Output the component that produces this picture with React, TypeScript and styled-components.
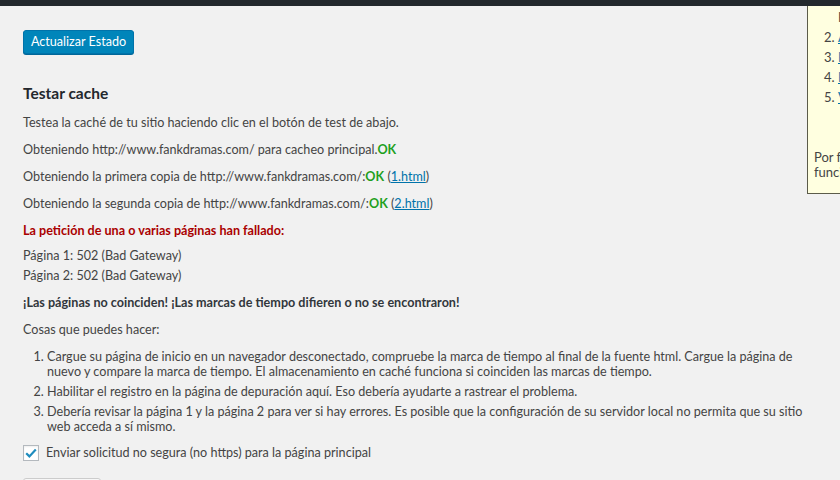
import React from "react";
import styled, { createGlobalStyle } from "styled-components";

const GlobalStyle = createGlobalStyle`
  html, body { margin: 0; padding: 0; }
  body {
    background: #f1f1f1;
    font-family: Lato, "Open Sans", sans-serif;
    font-size: 12.6px;
    color: #444;
    overflow: hidden;
    width: 840px;
    height: 480px;
  }
`;

const Page = styled.div`
  position: relative;
  width: 840px;
  height: 480px;
  overflow: hidden;
  display: flex;
  flex-direction: column;
`;

const AdminBar = styled.div`
  height: 6px;
  flex: none;
  background: #23282d;
`;

const Content = styled.main`
  display: flex;
  flex-direction: column;
  align-items: flex-start;
  padding: 0 33px 0 23px;
`;

const PrimaryButton = styled.button`
  margin-top: 24px;
  width: 111px;
  height: 24px;
  padding: 0;
  border: 1px solid #0073aa;
  border-radius: 3px;
  background: #0085ba;
  box-shadow: 0 1px 0 #006799;
  color: #fff;
  font-family: Lato, "Open Sans", sans-serif;
  font-size: 12.6px;
  line-height: 22px;
  text-align: center;
`;

const Heading = styled.h2`
  margin: 29px 0 0;
  font-size: 15.5px;
  line-height: 20px;
  font-weight: 700;
  color: #23282d;
`;

const Para = styled.p<{ $mt: number; $bold?: boolean; $red?: boolean }>`
  margin: ${(p) => p.$mt}px 0 0;
  line-height: 20px;
  font-weight: ${(p) => (p.$bold ? 700 : 400)};
  color: ${(p) => (p.$red ? "#a00" : p.$bold ? "#32373c" : "#444")};
  white-space: nowrap;
`;

const Ok = styled.strong`
  color: #1ea01e;
  font-weight: 700;
`;

const Link = styled.a`
  color: #0073aa;
  text-decoration: underline;
`;

const Steps = styled.ol`
  margin: 9px 0 0;
  padding: 0 0 0 24px;
  width: 760px;
  display: flex;
  flex-direction: column;
  gap: 5px;
`;

const Step = styled.li`
  line-height: 15px;
`;

const CheckRow = styled.label`
  margin-top: 11px;
  display: flex;
  align-items: center;
  gap: 7px;
  line-height: 16px;
`;

const CheckBox = styled.span`
  width: 16px;
  height: 16px;
  box-sizing: border-box;
  border: 1px solid #b4b9be;
  background: #fff;
  box-shadow: inset 0 1px 2px rgba(0, 0, 0, 0.07);
  display: flex;
  align-items: center;
  justify-content: center;
`;

const SecondaryButton = styled.button`
  margin-top: 17px;
  width: 78px;
  height: 28px;
  border: 1px solid #ccc;
  border-radius: 3px;
  background: #f7f7f7;
  box-shadow: 0 1px 0 #ccc;
  color: #555;
  font-family: Lato, "Open Sans", sans-serif;
  font-size: 13px;
`;

const HelpBox = styled.aside`
  position: absolute;
  top: 6px;
  left: 807px;
  width: 260px;
  height: 188px;
  box-sizing: border-box;
  background: #ffffe0;
  border: 1px solid #5b5b4a;
  border-top: none;
  padding: 0 0 0 6px;
  font-size: 13px;
  color: #444;
`;

const HelpList = styled.ol`
  margin: 0;
  padding: 1px 0 0 24px;
`;

const HelpItem = styled.li<{ $cont?: boolean }>`
  line-height: 20px;
  list-style: ${(p) => (p.$cont ? "none" : "decimal")};
`;

const HelpText = styled.p`
  margin: 43px 0 0;
  line-height: 15px;
  white-space: nowrap;
`;

function Check() {
  return (
    <svg width="14" height="14" viewBox="0 0 14 14">
      <path d="M2.2 7.2 L5.4 10.4 L11.8 3.6" fill="none" stroke="#1e8cbe" strokeWidth="2.2" />
    </svg>
  );
}

export default function App() {
  return (
    <>
      <GlobalStyle />
      <Page>
        <AdminBar />
        <Content>
          <PrimaryButton>Actualizar Estado</PrimaryButton>
          <Heading>Testar cache</Heading>
          <Para $mt={10}>Testea la caché de tu sitio haciendo clic en el botón de test de abajo.</Para>
          <Para $mt={7}>
            Obteniendo http://www.fankdramas.com/ para cacheo principal.<Ok>OK</Ok>
          </Para>
          <Para $mt={7}>
            Obteniendo la primera copia de http://www.fankdramas.com/:<Ok>OK</Ok> (<Link href="#">1.html</Link>)
          </Para>
          <Para $mt={7}>
            Obteniendo la segunda copia de http://www.fankdramas.com/:<Ok>OK</Ok> (<Link href="#">2.html</Link>)
          </Para>
          <Para $mt={7} $bold $red>
            La petición de una o varias páginas han fallado:
          </Para>
          <Para $mt={5}>
            Página 1: 502 (Bad Gateway)
            <br />
            Página 2: 502 (Bad Gateway)
          </Para>
          <Para $mt={7} $bold>
            ¡Las páginas no coinciden! ¡Las marcas de tiempo difieren o no se encontraron!
          </Para>
          <Para $mt={7}>Cosas que puedes hacer:</Para>
          <Steps>
            <Step>
              Cargue su página de inicio en un navegador desconectado, compruebe la marca de tiempo al final de la fuente html. Cargue la página de nuevo y compare la marca de tiempo. El almacenamiento en caché funciona si coinciden las marcas de tiempo.
            </Step>
            <Step>Habilitar el registro en la página de depuración aquí. Eso debería ayudarte a rastrear el problema.</Step>
            <Step>
              Debería revisar la página 1 y la página 2 para ver si hay errores. Es posible que la configuración de su servidor local no permita que su sitio web acceda a sí mismo.
            </Step>
          </Steps>
          <CheckRow>
            <CheckBox>
              <Check />
            </CheckBox>
            Enviar solicitud no segura (no https) para la página principal
          </CheckRow>
          <SecondaryButton>Testar cache</SecondaryButton>
        </Content>
        <HelpBox>
          <HelpList>
            <HelpItem $cont>Haga clic en el botón</HelpItem>
            <HelpItem value={2}>
              <Link href="#">Actualizar</Link>
            </HelpItem>
            <HelpItem>
              <Link href="#">Forzar</Link>
            </HelpItem>
            <HelpItem>
              <Link href="#">Purgar</Link>
            </HelpItem>
            <HelpItem>
              <Link href="#">Ver</Link>
            </HelpItem>
          </HelpList>
          <HelpText>
            Por favor, compruebe que la caché
            <br />
            funciona correctamente.
          </HelpText>
        </HelpBox>
      </Page>
    </>
  );
}
